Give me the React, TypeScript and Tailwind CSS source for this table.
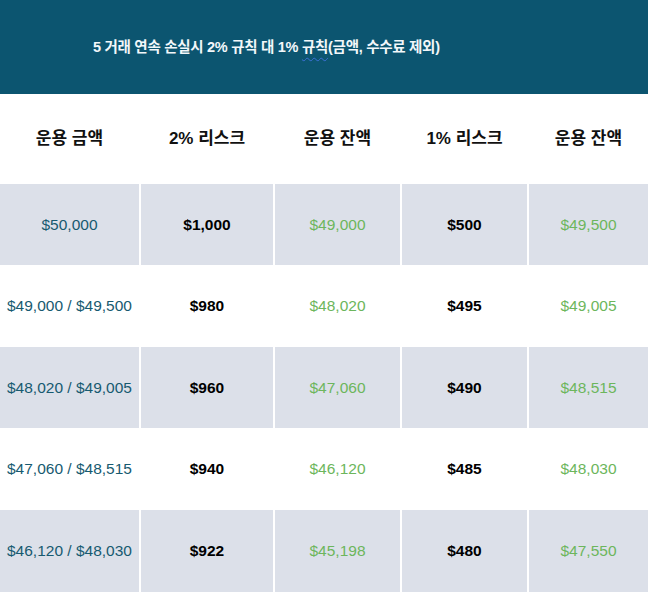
const rows = [
  { base: "$50,000", r2: "$1,000", b2: "$49,000", r1: "$500", b1: "$49,500" },
  { base: "$49,000 / $49,500", r2: "$980", b2: "$48,020", r1: "$495", b1: "$49,005" },
  { base: "$48,020 / $49,005", r2: "$960", b2: "$47,060", r1: "$490", b1: "$48,515" },
  { base: "$47,060 / $48,515", r2: "$940", b2: "$46,120", r1: "$485", b1: "$48,030" },
  { base: "$46,120 / $48,030", r2: "$922", b2: "$45,198", r1: "$480", b1: "$47,550" },
];

const heads = ["운용 금액", "2% 리스크", "운용 잔액", "1% 리스크", "운용 잔액"];
const heights = ["h-[81px]", "h-[82px]", "h-[81px]", "h-[82px]", "h-[82px]"];

export default function App() {
  return (
    <div
      className="w-[648px] h-[594px] bg-white overflow-hidden"
      style={{ fontFamily: '"Liberation Sans", "Noto Sans CJK KR", sans-serif' }}
    >
      {/* Title band */}
      <div className="h-[94px] bg-[#0c5570] flex items-center pl-[93px] pt-[1px]">
        <span className="text-[14.5px] font-semibold text-[#f2f7fa] tracking-[-0.02em]">
          5 거래 연속 손실시 2% 규칙 대 1%{" "}
          <span className="underline decoration-wavy decoration-[#3b6fd6] decoration-1 underline-offset-[5px]">규칙</span>
          (금액, 수수료 제외)
        </span>
      </div>

      <div className="grid grid-cols-[139px_132px_125px_125px_119px] gap-x-[2px]">
        {heads.map((h, i) => (
          <div
            key={i}
            className="h-[90px] flex items-center justify-center text-[17px] font-semibold text-[#111]"
          >
            {h}
          </div>
        ))}

        {rows.map((r, i) => {
          const bg = i % 2 === 0 ? "bg-[#dce0e9]" : "bg-white";
          const cell = `${heights[i]} ${bg} flex items-center justify-center text-[15.5px]`;
          return [
            <div key={`${i}a`} className={`${cell} text-[#175a70] font-medium`}>{r.base}</div>,
            <div key={`${i}b`} className={`${cell} text-black font-semibold`}>{r.r2}</div>,
            <div key={`${i}c`} className={`${cell} text-[#6cb65c]`}>{r.b2}</div>,
            <div key={`${i}d`} className={`${cell} text-black font-semibold`}>{r.r1}</div>,
            <div key={`${i}e`} className={`${cell} text-[#6cb65c]`}>{r.b1}</div>,
          ];
        })}
      </div>
    </div>
  );
}
